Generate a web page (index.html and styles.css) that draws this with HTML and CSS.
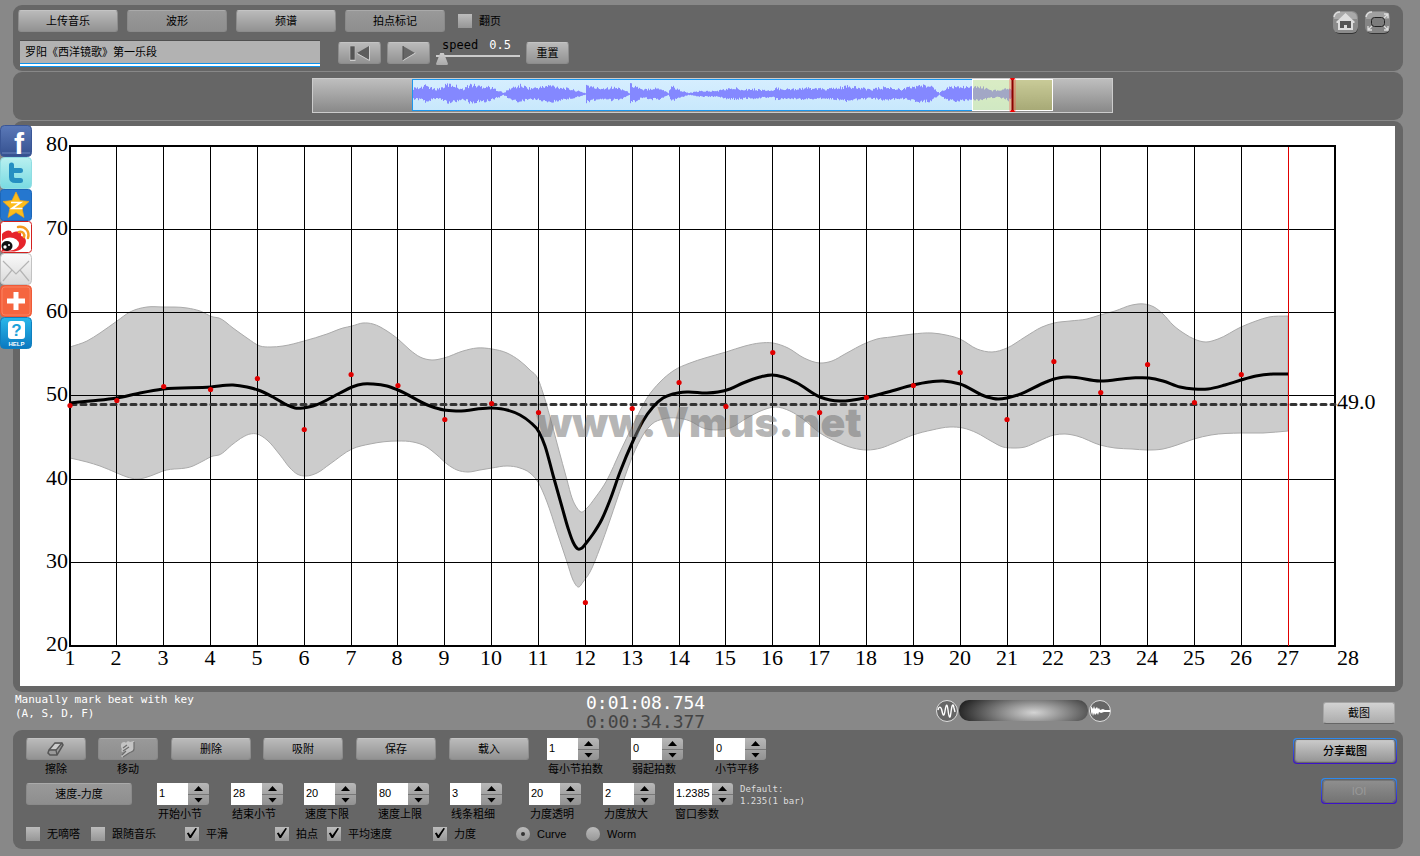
FILE: index.html
```
<!DOCTYPE html>
<html lang="zh-CN">
<head>
<meta charset="utf-8">
<title>Vmus.net</title>
<link rel="stylesheet" href="styles.css">
</head>
<body>
<main class="app">
  <header class="panel toolbar">
    <div class="toolbar-main">
      <div class="toolbar-tabs">
        <button class="btn btn-100">上传音乐</button>
        <button class="btn btn-100 is-on">波形</button>
        <button class="btn btn-100">频谱</button>
        <button class="btn btn-100 is-on">拍点标记</button>
        <label class="check page-turn"><input type="checkbox"><span>翻页</span></label>
      </div>
      <div class="toolbar-play">
        <input class="title-input" type="text" aria-label="曲名" value="罗阳《西洋镜歌》第一乐段">
        <button class="btn btn-43" aria-label="回到开头"><svg width="22" height="17" viewBox="0 0 22 17"><path d="M1 1h5v14H1z" fill="#555" stroke="#c4c4c4" stroke-width=".6"/><path d="M20 1v14L8 8z" fill="#5c5c5c"/><path d="M20.500 1v14.500L8 8.500M1 15.500h5.500" fill="none" stroke="#ccc"/></svg></button>
        <button class="btn btn-43" aria-label="播放"><svg width="22" height="17" viewBox="0 0 22 17"><path d="M5 1v14l12-7z" fill="#666"/><path d="M5 15.500L17.500 8" fill="none" stroke="#ccc"/><path d="M5 1v14" stroke="#4c4c4c"/></svg></button>
        <div class="speed">
          <label class="speed-text" for="speed">speed <output class="speed-value">0.5</output></label>
          <input id="speed" class="speed-range" type="range" min="0" max="10" value="0">
        </div>
        <button class="btn btn-43">重置</button>
      </div>
    </div>
    <nav class="toolbar-links">
      <button class="icon-btn" aria-label="主页"><svg width="28" height="26" viewBox="0 0 28 26"><rect x="2" y="2" width="24" height="22" rx="6" fill="#333"/><rect x="1" y="1" width="25" height="22" rx="6" fill="#8b8b8b"/><path d="M2 9c0-5 2-7 7-7h9c5 0 7 2 7 7z" fill="#a9a9a9"/><path d="M2 7q1-5 6-5" fill="none" stroke="#ddd" stroke-width="1.500"/><path d="M4 12L13.500 3l9.500 9-1 1h-1v7H6v-7H5z" fill="#ddd"/><path d="M8 11h11v7h-4v-3h-3v3H8z" fill="#555"/></svg></button>
      <button class="icon-btn" aria-label="全屏"><svg width="28" height="26" viewBox="0 0 28 26"><rect x="2" y="2" width="24" height="22" rx="6" fill="#333"/><rect x="1" y="1" width="25" height="22" rx="6" fill="#858585"/><path d="M2 9c0-5 2-7 7-7h9c5 0 7 2 7 7z" fill="#a0a0a0"/><path d="M2 7q1-5 6-5" fill="none" stroke="#ddd" stroke-width="1.500"/><rect x="7.500" y="7.500" width="13" height="9" rx="3" fill="#7c7c7c" stroke="#222"/><path d="M20 4h4v4M24 4l-4 4M4 16v4h4M4 20l4-4M24 16v4h-4M24 20l-4-4" fill="none" stroke="#ddd" stroke-width="1.300"/></svg></button>
    </nav>
  </header>

  <section class="panel overview">
    <svg class="overview-strip" viewBox="0 0 801 35" role="img" aria-label="波形总览">
      <defs>
        <linearGradient id="stripGrey" x1="0" y1="0" x2="0" y2="1"><stop offset="0" stop-color="#bfbfbf"/><stop offset="1" stop-color="#888"/></linearGradient>
        <linearGradient id="stripBlue" x1="0" y1="0" x2="0" y2="1"><stop offset="0" stop-color="#d6eeff"/><stop offset="1" stop-color="#c8e8fc"/></linearGradient>
      </defs>
      <rect x=".5" y=".5" width="800" height="34" fill="url(#stripGrey)" stroke="#ccc"/>
      <rect x="100.500" y="1.500" width="600" height="31" fill="url(#stripBlue)" stroke="#1c97ee"/>
      <path id="wave" fill="none" stroke="#8488ff"/>
      <rect x="660.500" y="1.500" width="80" height="31" fill="#e4e84c" fill-opacity=".32" stroke="#fff"/>
      <rect x="697" y="1" width="7" height="33" fill="#f44" fill-opacity=".3"/>
      <path d="M700.500 1v33" stroke="#8c0000" stroke-width="2"/>
      <path d="M698 0h5l-1 2h-3zM699 32h3l1 2h-5z" fill="#e00"/>
    </svg>
  </section>

  <section class="panel chart-panel">
    <svg id="chart" class="chart" viewBox="20 126 1375 560" role="img" aria-label="速度-力度曲线">
      <rect x="20" y="126" width="1375" height="560" fill="#fff"/>
      <path id="band" class="band"/>
      <g id="grid" class="grid"></g>
      <path class="average" d="M71 404.500H1335"/>
      <path id="curve" class="curve"/>
      <g id="beats" class="beats"></g>
      <path d="M1288.500 147v499" stroke="#e00000"/>
      <text class="watermark" x="699" y="437">www.Vmus.net</text>
      <g id="labels" class="axis"></g>
      <text class="axis" x="1337" y="409">49.0</text>
    </svg>
  </section>

  <section class="status">
    <p class="hint">Manually mark beat with key<br>(A, S, D, F)</p>
    <p class="timer"><span>0:01:08.754</span><span class="timer-dim">0:00:34.377</span></p>
    <div class="dial">
      <svg width="24" height="24" viewBox="0 0 24 24"><circle cx="12" cy="12" r="10.500" fill="#666" stroke="#ddd"/><path d="M3 11c1-4 3-4 4 1s2 6 3 0 2-9 3-1 2 10 3 2 2-9 3-4l1 4" fill="none" stroke="#fff" stroke-width="1.400"/></svg>
      <div class="dial-wheel"></div>
      <svg width="24" height="24" viewBox="0 0 24 24"><circle cx="12" cy="12" r="10.500" fill="#666" stroke="#ddd"/><path d="M3 7l2 3 1-3 1 3 2-2 1 2 1-1 1 2 3-1 2 1h5v2h-6l-3 1-2-1-1 3-1-2-2 2-1-2-1 3-1-4-1 3z" fill="#fff"/></svg>
    </div>
    <button class="btn btn-72 light">截图</button>
  </section>

  <section class="panel controls">
    <div class="controls-main">
      <div class="row row-tools">
        <div class="tool"><button class="btn btn-60" id="erase" aria-label="擦除"><svg width="20" height="16" viewBox="0 0 20 16"><path d="M3 9L9 2h7l1 2-6 10H4L2 12z" fill="#999" stroke="#555" stroke-width="1.500"/><path d="M3 9h7l6-7M10 9l1 5" fill="none" stroke="#555" stroke-width="1.300"/><path d="M5 8l4-5h5l-4 5z" fill="#ccc"/></svg></button><label for="erase">擦除</label></div>
        <div class="tool"><button class="btn btn-60 is-on" id="move" aria-label="移动"><svg width="20" height="18" viewBox="0 0 20 18"><path d="M3 5c0-3 4-4 5-2 1-2 3-2 4-1l4-1v8c0 3-4 3-5 4l-6 4c-2 1-2-1-1-2l4-4-3 1c-2 0-2-2-1-3-1-1-1-2-1-4z" fill="#c4c4c4"/><path d="M5 8l4-3M5 11l6-4M16 2v7c0 3-4 3-5 4l-6 4M4 15l4-4" fill="none" stroke="#6c6c6c" stroke-width="1.200"/></svg></button><label for="move">移动</label></div>
        <button class="btn btn-80">删除</button>
        <button class="btn btn-80">吸附</button>
        <button class="btn btn-80">保存</button>
        <button class="btn btn-80">载入</button>
        <div class="field"><div class="spin"><input id="f1" type="text" value="1"><span class="steps"><button aria-label="增加"></button><button aria-label="减少"></button></span></div><label for="f1">每小节拍数</label></div>
        <div class="field"><div class="spin"><input id="f2" type="text" value="0"><span class="steps"><button aria-label="增加"></button><button aria-label="减少"></button></span></div><label for="f2">弱起拍数</label></div>
        <div class="field"><div class="spin"><input id="f3" type="text" value="0"><span class="steps"><button aria-label="增加"></button><button aria-label="减少"></button></span></div><label for="f3">小节平移</label></div>
      </div>
      <div class="row row-values">
        <button class="btn btn-106 is-on">速度-力度</button>
        <div class="field"><div class="spin"><input id="v1" type="text" value="1"><span class="steps"><button aria-label="增加"></button><button aria-label="减少"></button></span></div><label for="v1">开始小节</label></div>
        <div class="field"><div class="spin"><input id="v2" type="text" value="28"><span class="steps"><button aria-label="增加"></button><button aria-label="减少"></button></span></div><label for="v2">结束小节</label></div>
        <div class="field"><div class="spin"><input id="v3" type="text" value="20"><span class="steps"><button aria-label="增加"></button><button aria-label="减少"></button></span></div><label for="v3">速度下限</label></div>
        <div class="field"><div class="spin"><input id="v4" type="text" value="80"><span class="steps"><button aria-label="增加"></button><button aria-label="减少"></button></span></div><label for="v4">速度上限</label></div>
        <div class="field"><div class="spin"><input id="v5" type="text" value="3"><span class="steps"><button aria-label="增加"></button><button aria-label="减少"></button></span></div><label for="v5">线条粗细</label></div>
        <div class="field"><div class="spin"><input id="v6" type="text" value="20"><span class="steps"><button aria-label="增加"></button><button aria-label="减少"></button></span></div><label for="v6">力度透明</label></div>
        <div class="field"><div class="spin"><input id="v7" type="text" value="2"><span class="steps"><button aria-label="增加"></button><button aria-label="减少"></button></span></div><label for="v7">力度放大</label></div>
        <div class="field"><div class="spin wide"><input id="v8" type="text" value="1.2385"><span class="steps"><button aria-label="增加"></button><button aria-label="减少"></button></span></div><label for="v8">窗口参数</label></div>
        <p class="default">Default:<br>1.235(1 bar)</p>
      </div>
      <div class="row row-checks">
        <label class="check"><input type="checkbox"><span>无嘀嗒</span></label>
        <label class="check"><input type="checkbox"><span>跟随音乐</span></label>
        <label class="check"><input type="checkbox" checked><span>平滑</span></label>
        <label class="check"><input type="checkbox" checked><span>拍点</span></label>
        <label class="check"><input type="checkbox" checked><span>平均速度</span></label>
        <label class="check"><input type="checkbox" checked><span>力度</span></label>
        <label class="check"><input type="radio" name="mode" checked><span>Curve</span></label>
        <label class="check"><input type="radio" name="mode"><span>Worm</span></label>
      </div>
    </div>
    <div class="controls-share">
      <div class="ring"><button class="btn btn-100 strong">分享截图</button></div>
      <div class="ring"><button class="btn btn-72" disabled>IOI</button></div>
    </div>
  </section>
</main>

<nav class="social" aria-label="分享">
  <a href="#" aria-label="Facebook"><svg viewBox="0 0 32 32"><defs><linearGradient id="sFb" x1="0" y1="0" x2="0" y2="1"><stop offset="0" stop-color="#5b79b8"/><stop offset="1" stop-color="#34508f"/></linearGradient></defs><rect x=".5" y=".5" width="31" height="31" rx="4" fill="url(#sFb)" stroke="#3a5696"/><path d="M2 28h28" stroke="#6d86bd"/><text class="logo-f" x="14" y="29">f</text></svg></a>
  <a href="#" aria-label="Twitter"><svg viewBox="0 0 32 32"><defs><linearGradient id="sTw" x1="0" y1="0" x2="0" y2="1"><stop offset="0" stop-color="#b9f0f0"/><stop offset="1" stop-color="#79dbe2"/></linearGradient></defs><rect x=".5" y=".5" width="31" height="31" rx="4" fill="url(#sTw)" stroke="#8fdde2"/><path d="M11.500 8v12q0 3.500 4 3.500h5M11.500 13.500h9" fill="none" stroke="#258fc2" stroke-width="5" stroke-linecap="round" stroke-linejoin="round"/></svg></a>
  <a href="#" aria-label="QQ空间"><svg viewBox="0 0 32 32"><rect x=".5" y=".5" width="31" height="31" rx="3" fill="#2577cf" stroke="#1c66b8"/><path d="M16 3l4 8.500 9 1-7 6.500 2 9.500-8-5-8 5 2-9.500-7-6.500 9-1z" fill="#fdbd1b" stroke="#f3a313" stroke-width=".7"/><path d="M11 13.500h9.500L12 19.500h10.500" fill="none" stroke="#fff" stroke-width="1.700"/></svg></a>
  <a href="#" aria-label="新浪微博"><svg viewBox="0 0 32 32"><rect x=".5" y=".5" width="31" height="31" rx="3" fill="#fff" stroke="#d3201f"/><path d="M2 13c3-4 9-5 10-1 6-3 10-1 9 3 5 1 6 5 4 9-2 4-8 7-14 6.500H2z" fill="#e6252b"/><ellipse cx="10" cy="23" rx="9" ry="6.500" fill="#fff"/><ellipse cx="7" cy="25" rx="5.500" ry="5" fill="#111"/><circle cx="5" cy="26" r="1.700" fill="#fff"/><circle cx="9" cy="24" r="1" fill="#fff"/><path d="M18 6c7-1 12 4 10 11M19 11c4-1 6 2 5 5" fill="none" stroke="#f59b20" stroke-width="2.500" stroke-linecap="round"/></svg></a>
  <a href="#" aria-label="邮件"><svg viewBox="0 0 32 32"><defs><linearGradient id="sMail" x1="0" y1="0" x2="0" y2="1"><stop offset="0" stop-color="#fafafa"/><stop offset="1" stop-color="#d9d9d9"/></linearGradient></defs><rect x=".5" y=".5" width="31" height="31" rx="4" fill="url(#sMail)" stroke="#c2c2c2"/><path d="M3 8l13 13L29 8M3 28l9-11M29 28l-9-11" fill="none" stroke="#b4b4b4" stroke-width="1.200"/></svg></a>
  <a href="#" aria-label="更多"><svg viewBox="0 0 32 32"><rect x=".5" y=".5" width="31" height="31" rx="4" fill="#f5653f" stroke="#ee5a38"/><rect x="2" y="2" width="28" height="28" rx="3" fill="none" stroke="#fa8160"/><path d="M16 7v18M7 16h18" stroke="#fff" stroke-width="5"/></svg></a>
  <a href="#" aria-label="帮助"><svg viewBox="0 0 32 32"><defs><linearGradient id="sHelp" x1="0" y1="0" x2="0" y2="1"><stop offset="0" stop-color="#28b8ea"/><stop offset="1" stop-color="#0b78c0"/></linearGradient></defs><rect x=".5" y=".5" width="31" height="31" rx="4" fill="url(#sHelp)" stroke="#0f7fbe"/><rect x="8" y="4" width="17" height="18" rx="3" fill="#fff"/><text class="logo-mark" x="16.500" y="19">?</text><text class="logo-help" x="16.500" y="29">HELP</text></svg></a>
</nav>
<script src="app.js"></script>
</body>
</html>
```
FILE: styles.css
```
* { box-sizing: border-box; }

body {
  margin: 0;
  min-height: 100vh;
  background: #888;
  color: #000;
  font: 11px/14px "Liberation Sans", "Noto Sans CJK SC", sans-serif;
}

p { margin: 0; }
button, input { font: inherit; color: inherit; margin: 0; }

.app {
  display: flex;
  flex-direction: column;
  gap: 1px;
  padding: 5px 17px 7px 13px;
}

.panel { background: #666; border-radius: 9px; }

/* Buttons */
.btn {
  display: flex;
  align-items: center;
  justify-content: center;
  height: 22px;
  padding: 0;
  border: 1px solid #8c8c8c;
  border-top-color: #c4c4c4;
  border-radius: 3px;
  background: linear-gradient(#bababa, #929292);
  white-space: nowrap;
}
.btn.is-on { background: linear-gradient(#999, #8e8e8e); border-color: #8a8a8a; border-top-color: #aaa; }
.btn.light { background: linear-gradient(#d2d2d2, #acacac); border-color: #a5a5a5; border-bottom-color: #666; }
.btn.strong { font-weight: 500; background: linear-gradient(#c8c8c8, #979797); }
.btn:disabled { background: linear-gradient(#8e8e8e, #757575); border-color: #777; color: #999; }
.btn-43 { width: 43px; }
.btn-60 { width: 60px; }
.btn-72 { width: 72px; }
.btn-80 { width: 80px; }
.btn-100 { width: 100px; }
.btn-106 { width: 106px; }

/* Check boxes and radio buttons */
.check { display: flex; align-items: center; gap: 7px; height: 14px; white-space: nowrap; }
.check input {
  appearance: none;
  position: relative;
  width: 14px;
  height: 14px;
  background: linear-gradient(#bcbcbc, #969696);
}
.check input[type="checkbox"]:checked::before {
  content: "";
  position: absolute;
  inset: 1px 2px 3px 1px;
  background: #000;
  clip-path: polygon(8% 52%, 24% 46%, 40% 72%, 86% 0, 100% 4%, 46% 100%, 32% 100%);
}
.check input[type="radio"] { border-radius: 50%; }
.check input[type="radio"]:checked::before {
  content: "";
  position: absolute;
  inset: 5px;
  border-radius: 50%;
  background: #333;
}

/* Top toolbar */
.toolbar { display: flex; justify-content: space-between; padding: 5px 11px 4px 5px; }
.toolbar-tabs { display: flex; align-items: center; gap: 9px; height: 22px; }
.page-turn { margin-left: 4px; }
.toolbar-play { display: flex; align-items: flex-start; gap: 6px; margin: 8px 0 0 2px; }
.toolbar-play .btn { margin-top: 2px; }
.title-input {
  width: 300px;
  height: 27px;
  margin-right: 12px;
  padding: 0 5px 5px;
  border: 0;
  border-top: 1px solid #505050;
  border-bottom: 1px solid #0c93ee;
  background: linear-gradient(#b2b2b2, #b2b2b2) no-repeat 0 0 / 100% 22px, linear-gradient(#0c93ee, #0c93ee) no-repeat 0 22px / 100% 1px, #fff;
}
.speed { display: flex; flex-direction: column; width: 84px; }
.speed-text { display: flex; justify-content: space-between; padding: 0 9px 0 6px; font: 12px/10px "DejaVu Sans Mono", monospace; }
.speed-value { color: #fff; }
.speed-range { appearance: none; width: 84px; height: 12px; background: none; }
.speed-range::-webkit-slider-runnable-track { height: 2px; background: #ccc; }
.speed-range::-webkit-slider-thumb {
  appearance: none;
  width: 12px;
  height: 12px;
  margin-top: -2px;
  background: linear-gradient(#ccc, #aaa);
  clip-path: polygon(35% 0, 65% 0, 100% 90%, 95% 100%, 5% 100%, 0 90%);
}
.toolbar-links { display: flex; align-items: flex-start; gap: 4px; }
.icon-btn { padding: 0; border: 0; background: none; line-height: 0; }

/* Overview */
.overview { display: flex; justify-content: center; padding: 6px 0 7px 9px; }
.overview-strip { display: block; width: 801px; max-width: 100%; }

/* Chart */
.chart-panel { padding: 5px 8px 6px 7px; }
.chart { display: block; width: 100%; height: auto; }
.band { fill: #ccc; stroke: #aaa; }
.grid { fill: none; stroke: #000; stroke-width: 1px; }
.grid .frame { stroke-width: 2px; }
.average { stroke: #333; stroke-width: 3px; stroke-dasharray: 5 5; stroke-linecap: round; }
.curve { fill: none; stroke: #000; stroke-width: 3px; }
.beats { fill: #e00000; }
.watermark { font: 900 41px Inter, sans-serif; fill: #777; fill-opacity: .55; text-anchor: middle; }
.axis { font: 22px "Liberation Serif", serif; fill: #000; }

/* Status strip */
.status { display: grid; grid-template-columns: 573fr 349fr 388fr 80fr; height: 36px; }
.hint { padding-left: 2px; font: 11px/14px "DejaVu Sans Mono", monospace; color: #fff; }
.timer { display: flex; flex-direction: column; font: 18px/19px "DejaVu Sans Mono", monospace; color: #fff; }
.timer-dim { color: #444; }
.dial { display: flex; align-items: center; height: 35px; }
.dial-wheel {
  width: 129px;
  height: 21px;
  border-radius: 10px;
  background: radial-gradient(ellipse 60% 120% at 58% 60%, #d4d4d4, #7c7c7c 50%, #222);
}
.status .btn { margin-top: 9px; }

/* Bottom controls */
.controls { display: flex; justify-content: space-between; padding: 8px 6px 8px 13px; }
.row { display: grid; justify-items: start; align-items: start; }
.row-tools { grid-template-columns: 72px 73px 92px 93px 93px 98px 84px 83px 60px; height: 45px; }
.row-values { grid-template-columns: 131px 74px 73px 73px 73px 79px 74px 71px 66px 80px; height: 44px; }
.row-checks { grid-template-columns: 65px 94px 90px 52px 106px 83px 70px 70px; }
.tool { display: flex; flex-direction: column; align-items: center; gap: 2px; }
.field { display: flex; flex-direction: column; gap: 2px; white-space: nowrap; }
.field label { padding-left: 1px; }
.spin { display: flex; height: 22px; }
.spin input { width: 31px; height: 22px; padding: 0 2px 3px; border: 0; background: #fff; }
.spin.wide input { width: 38px; }
.steps { display: flex; flex-direction: column; width: 21px; border-radius: 0 3px 3px 0; overflow: hidden; }
.steps button {
  display: flex;
  align-items: center;
  justify-content: center;
  height: 11px;
  padding: 0;
  border: 0;
  background: linear-gradient(#b8b8b8, #a4a4a4);
}
.steps button + button { border-top: 1px solid #777; background: linear-gradient(#a2a2a2, #929292); }
.steps button::before { content: ""; width: 9px; height: 5px; background: #000; clip-path: polygon(50% 0, 100% 100%, 0 100%); }
.steps button + button::before { clip-path: polygon(0 0, 100% 0, 50% 100%); }
.default { font: 9px/12px "DejaVu Sans Mono", monospace; color: #ddd; white-space: nowrap; }
.controls-share { display: flex; flex-direction: column; align-items: flex-end; gap: 14px; }
.ring { padding: 2px; border-radius: 4px; background: linear-gradient(#2c8cf0, #3c10c8); }
.ring .btn { box-shadow: 0 0 0 1px #666; }

/* Share bar over the chart's left edge */
.social { position: absolute; left: 0; top: 125px; width: 32px; }
.social a { display: block; height: 32px; }
.social svg { display: block; width: 32px; height: 32px; overflow: visible; }
.social text { font-family: "Liberation Sans", sans-serif; font-weight: 700; fill: #fff; text-anchor: middle; }
.social .logo-f { font-size: 30px; text-anchor: start; }
.social .logo-mark { font-size: 17px; fill: #1ba2da; }
.social .logo-help { font-size: 6px; }
```
FILE: app.js
```
const NS = 'http://www.w3.org/2000/svg';
const byId = id => document.getElementById(id);

function add(parent, name, attrs, text) {
  const el = document.createElementNS(NS, name);
  for (const key in attrs) el.setAttribute(key, attrs[key]);
  if (text !== undefined) el.textContent = text;
  parent.appendChild(el);
}

// Chart curves as x,y pairs in the chart's own units.
const upper = [70,347,87,341,100,333,117,321,130,312,147,307,163,307,187,308,200,311,213,317,219,318,233,328,247,338,260,346,270,347,283,346,304,341,327,334,343,328,352,326,363,323,373,324,387,331,398,339,410,350,420,357,432,360,444,358,463,351,477,348,492,349,507,353,520,361,530,370,538,379,543,393,550,417,558,447,567,480,572,498,577,508,581,512,587,508,595,498,607,480,620,452,633,425,647,398,660,382,673,371,690,363,705,358,726,352,745,346,760,343,773,343,788,348,804,358,820,363,832,361,845,354,866,343,877,339,891,337,913,334,932,333,946,335,960,339,977,349,992,352,1007,348,1025,337,1042,327,1054,323,1070,321,1087,319,1100,315,1115,311,1132,305,1144,304,1154,307,1163,314,1173,325,1185,334,1194,339,1206,342,1218,339,1241,327,1256,321,1269,317,1288,316];
const lower = [70,458,87,462,100,466,117,473,127,477,137,479,153,475,163,471,193,466,203,461,213,456,219,455,233,444,243,437,250,434,257,434,267,440,280,455,290,468,297,474,306,476,317,473,330,464,352,449,370,444,398,441,413,442,425,446,437,455,447,464,457,470,468,472,480,470,492,468,507,466,520,468,530,473,538,482,547,502,557,532,567,562,573,580,579,587,583,582,590,572,600,548,610,520,623,482,633,455,643,435,652,424,663,419,677,418,690,421,703,428,717,430,730,428,747,418,763,410,775,407,790,411,803,419,820,433,837,442,853,448,867,450,881,448,894,443,913,435,932,430,950,427,963,428,977,433,991,441,1003,447,1013,448,1025,447,1039,441,1054,435,1065,434,1077,436,1100,445,1115,448,1132,449,1147,450,1163,449,1177,445,1194,439,1211,435,1241,433,1263,433,1288,431];
const tempo = [70,403,90,401,117,398,140,393,163,389,211,387,233,385,247,387,258,390,273,397,287,405,295,408,303,408,313,406,340,393,352,387,363,384,373,384,387,386,398,390,430,406,444,410,457,411,492,408,507,410,520,415,530,422,539,432,545,446,553,475,562,507,568,528,573,542,578,549,582,548,587,542,593,534,602,519,610,500,620,472,633,441,643,421,653,407,663,398,673,394,687,392,707,393,718,392,730,389,743,383,760,377,772,375,783,377,797,383,820,397,830,400,840,401,853,400,888,392,913,385,929,382,943,381,960,384,987,397,998,399,1007,398,1018,395,1046,382,1054,379,1067,377,1100,381,1132,378,1149,378,1163,381,1180,387,1194,389,1208,389,1225,385,1241,380,1256,376,1273,374,1288,374];
const beats = [405,400,386,389,378,429,374,385,419,403,412,602,408,382,406,352,412,397,385,372,419,361,392,364,402,374];

const pairs = flat => flat.reduce((out, v, i) => (i % 2 ? out[out.length - 1].push(v) : out.push([v]), out), []);

// Smooth line through the points; each slope is weighted by how near its neighbours lie.
function spline(p) {
  const slope = i => {
    const a = p[i - 1], b = p[i], c = p[i + 1];
    if (!a) return (c[1] - b[1]) / (c[0] - b[0]);
    if (!c) return (b[1] - a[1]) / (b[0] - a[0]);
    const h0 = b[0] - a[0], h1 = c[0] - b[0];
    return ((b[1] - a[1]) / h0 * h1 + (c[1] - b[1]) / h1 * h0) / (h0 + h1);
  };
  let d = '';
  for (let i = 0; i < p.length - 1; i++) {
    const b = p[i], c = p[i + 1], t = (c[0] - b[0]) / 3;
    d += `C${b[0] + t} ${b[1] + slope(i) * t} ${c[0] - t} ${c[1] - slope(i + 1) * t} ${c[0]} ${c[1]}`;
  }
  return d;
}

const up = pairs(upper), low = pairs(lower).reverse(), mid = pairs(tempo);
byId('band').setAttribute('d', `M${up[0]}${spline(up)}L${low[0]}${spline(low)}Z`);
byId('curve').setAttribute('d', `M${mid[0]}${spline(mid)}`);

const barX = n => 70 + (n - 1) * 1265 / 27;
const grid = byId('grid'), labels = byId('labels');
for (let n = 1; n <= 28; n++) {
  const x = Math.floor(barX(n));
  if (n > 1 && n < 28) add(grid, 'path', { d: `M${x + .5} 146V646` });
  add(labels, 'text', { x: n === 28 ? 1348 : x, y: 665, 'text-anchor': 'middle' }, n);
}
for (let v = 20; v <= 80; v += 10) {
  const y = Math.floor(145.9 + (80 - v) * 500 / 60);
  if (v > 20 && v < 80) add(grid, 'path', { d: `M70 ${y + .5}H1335` });
  add(labels, 'text', { x: 68, y: y + 6, 'text-anchor': 'end' }, v);
}
add(grid, 'rect', { class: 'frame', x: 70, y: 146, width: 1265, height: 500 });
beats.forEach((y, i) => add(byId('beats'), 'circle', { cx: barX(i + 1), cy: y + .5, r: 2.6 }));

// Overview waveform: x, half-height pairs of its envelope.
const envelope = pairs([101,6,108,6,114,9,121,5,128,6,135,10,143,9,150,5,158,10,168,8,175,8,183,5,188,3,191,1,198,6,208,9,218,6,228,7,238,9,248,7,258,5,266,3,273,1,274,10,280,7,288,6,298,7,308,6,314,3,317,1,318,10,324,8,330,4,338,6,348,6,356,1,359,9,365,5,376,1,388,3,403,3,413,5,423,6,433,5,443,5,453,4,461,3,463,6,478,5,488,6,500,6,512,5,524,6,536,8,548,6,560,5,572,7,588,5,608,9,618,8,627,1,633,6,643,8,653,7,660,7,668,8,678,4,688,4,696,7,700,4]);
let wave = '';
for (let x = 101, k = 0; x < 700; x++) {
  while (envelope[k + 1][0] < x) k++;
  const [x0, h0] = envelope[k], [x1, h1] = envelope[k + 1];
  const h = h0 + (h1 - h0) * (x - x0) / (x1 - x0);
  const n1 = Math.abs(Math.sin(x * 12.9898) * 43758.5453 % 1), n2 = Math.abs(Math.sin(x * 78.233) * 12543.21 % 1);
  wave += `M${x + .5} ${(16 - h * (.65 + n1 * .5)).toFixed(1)}V${(16 + h * (.65 + n2 * .4)).toFixed(1)}`;
}
byId('wave').setAttribute('d', wave);
```
